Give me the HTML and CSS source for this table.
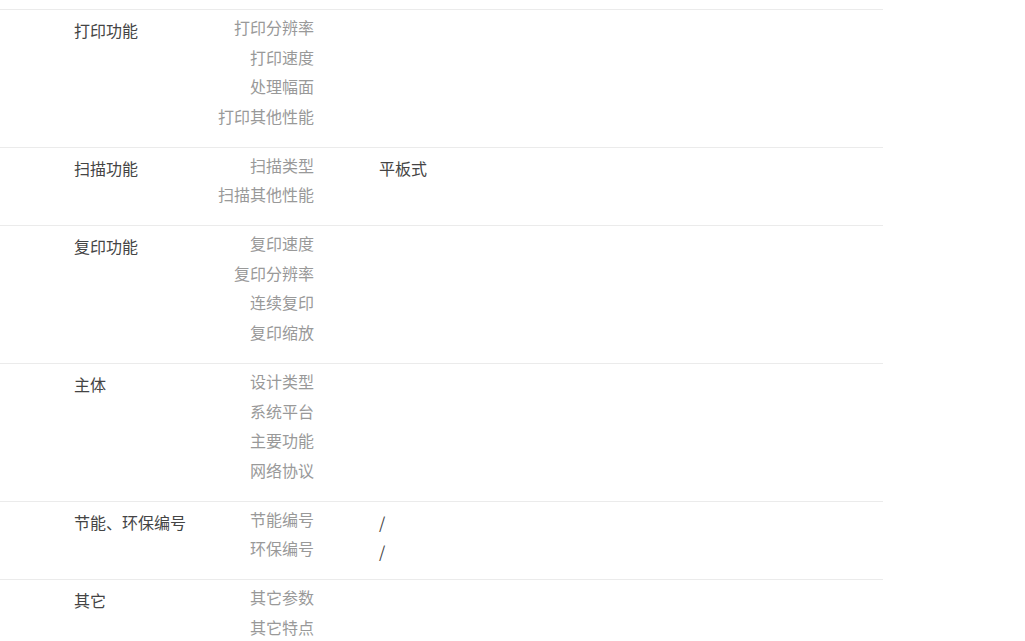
FILE: index.html
```html
<!DOCTYPE html>
<html lang="zh-CN">
<head>
  <meta charset="UTF-8" />
  <meta name="viewport" content="width=device-width, initial-scale=1.0" />
  <title>产品参数</title>
  <link rel="stylesheet" href="styles.css">
</head>
<body>
<div class="params">
  <div class="group">
    <div class="cat">打印功能</div>
    <div class="items">
      <div class="item"><span class="name">打印分辨率</span></div>
      <div class="item"><span class="name">打印速度</span></div>
      <div class="item"><span class="name">处理幅面</span></div>
      <div class="item"><span class="name">打印其他性能</span></div>
    </div>
  </div>

  <div class="group">
    <div class="cat">扫描功能</div>
    <div class="items">
      <div class="item"><span class="name">扫描类型</span><span class="val">平板式</span></div>
      <div class="item"><span class="name">扫描其他性能</span></div>
    </div>
  </div>

  <div class="group">
    <div class="cat">复印功能</div>
    <div class="items">
      <div class="item"><span class="name">复印速度</span></div>
      <div class="item"><span class="name">复印分辨率</span></div>
      <div class="item"><span class="name">连续复印</span></div>
      <div class="item"><span class="name">复印缩放</span></div>
    </div>
  </div>

  <div class="group">
    <div class="cat">主体</div>
    <div class="items">
      <div class="item"><span class="name">设计类型</span></div>
      <div class="item"><span class="name">系统平台</span></div>
      <div class="item"><span class="name">主要功能</span></div>
      <div class="item"><span class="name">网络协议</span></div>
    </div>
  </div>

  <div class="group">
    <div class="cat">节能、环保编号</div>
    <div class="items">
      <div class="item"><span class="name">节能编号</span><span class="val">/</span></div>
      <div class="item"><span class="name">环保编号</span><span class="val">/</span></div>
    </div>
  </div>

  <div class="group">
    <div class="cat">其它</div>
    <div class="items">
      <div class="item"><span class="name">其它参数</span></div>
      <div class="item"><span class="name">其它特点</span></div>
    </div>
  </div>
</div>
</body>
</html>
```

FILE: styles.css
```css
html, body {
  overflow: hidden;
}
body {
  margin: 0;
  padding: 0;
  background: #fff;
  font-family: "Noto Sans CJK SC", "Noto Sans", sans-serif;
  font-size: 16px;
  color: #333;
}
.params {
  width: 883px;
  padding-top: 9px;
}
.group {
  display: flex;
  border-top: 1px solid #ebebeb;
  padding: 3px 0 15.33px 74px;
}
.cat {
  width: 121px;
  padding-top: 3px;
  line-height: 29.6px;
  color: #444;
}
.items {
  flex: 1;
}
.item {
  display: flex;
  line-height: 29.6px;
}
.name {
  width: 119px;
  text-align: right;
  color: #999;
}
.val {
  margin-left: 65px;
  padding-top: 3px;
  margin-bottom: -3px;
  color: #444;
}
```
